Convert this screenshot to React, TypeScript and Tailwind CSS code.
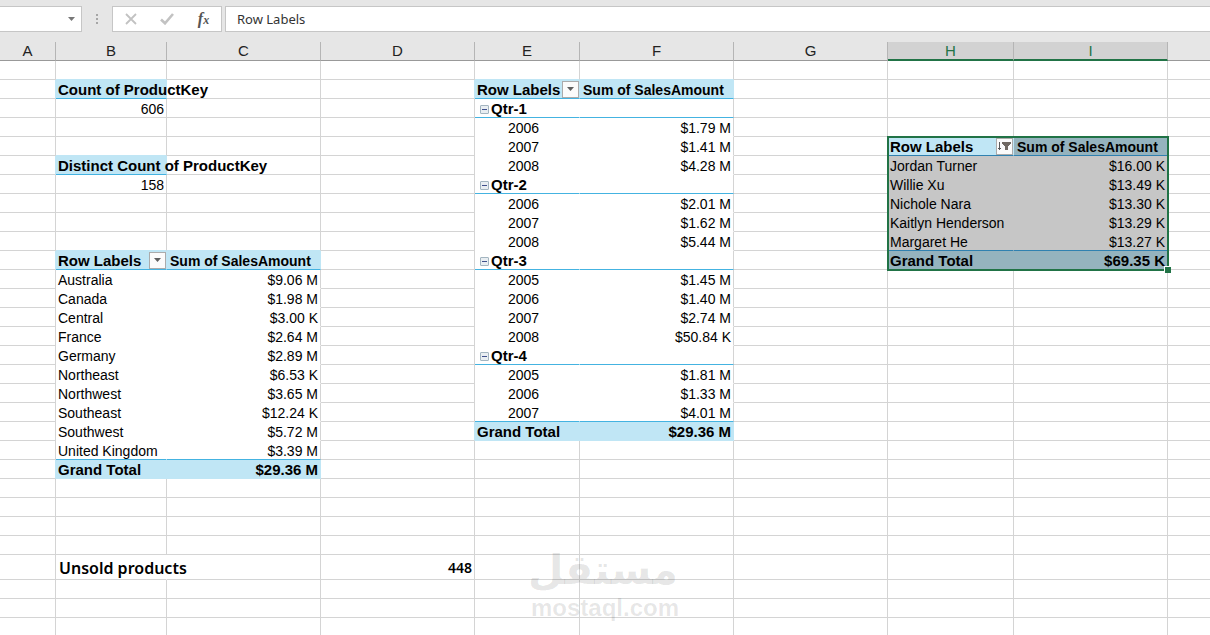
import React from "react";
import clsx from "clsx";

type CellKind = "label" | "amount" | "count" | "sum" | "filter" | "group" | "year" | "note" | "noteValue";

interface Cell {
  text: string;
  kind: CellKind;
  bold?: boolean;
}

const columns = [
  { name: "A", width: "w-[56px]" },
  { name: "B", width: "w-[111px]" },
  { name: "C", width: "w-[154px]" },
  { name: "D", width: "w-[154px]" },
  { name: "E", width: "w-[105px]" },
  { name: "F", width: "w-[154px]" },
  { name: "G", width: "w-[154px]" },
  { name: "H", width: "w-[126px]" },
  { name: "I", width: "w-[154px]" },
  { name: "", width: "" },
];

const ROW_COUNT = 30;
const NOTE_ROW = 27;

const cells: Record<string, Cell> = {};

const countries = [
  ["Australia", "$9.06 M"],
  ["Canada", "$1.98 M"],
  ["Central", "$3.00 K"],
  ["France", "$2.64 M"],
  ["Germany", "$2.89 M"],
  ["Northeast", "$6.53 K"],
  ["Northwest", "$3.65 M"],
  ["Southeast", "$12.24 K"],
  ["Southwest", "$5.72 M"],
  ["United Kingdom", "$3.39 M"],
];

const quarters = [
  ["Qtr-1", ""],
  ["2006", "$1.79 M"],
  ["2007", "$1.41 M"],
  ["2008", "$4.28 M"],
  ["Qtr-2", ""],
  ["2006", "$2.01 M"],
  ["2007", "$1.62 M"],
  ["2008", "$5.44 M"],
  ["Qtr-3", ""],
  ["2005", "$1.45 M"],
  ["2006", "$1.40 M"],
  ["2007", "$2.74 M"],
  ["2008", "$50.84 K"],
  ["Qtr-4", ""],
  ["2005", "$1.81 M"],
  ["2006", "$1.33 M"],
  ["2007", "$4.01 M"],
];

const customers = [
  ["Jordan Turner", "$16.00 K"],
  ["Willie Xu", "$13.49 K"],
  ["Nichole Nara", "$13.30 K"],
  ["Kaitlyn Henderson", "$13.29 K"],
  ["Margaret He", "$13.27 K"],
];

// writes one pivot table into the sheet, header row first
const addPivot = (left: string, right: string, top: number, rows: string[][], total: string) => {
  cells[left + top] = { text: "Row Labels", kind: "filter", bold: true };
  cells[right + top] = { text: "Sum of SalesAmount", kind: "sum", bold: true };
  rows.forEach(([label, amount], i) => {
    const row = top + 1 + i;
    const kind = label.startsWith("Qtr") ? "group" : /^\d+$/.test(label) ? "year" : "label";
    cells[left + row] = { text: label, kind, bold: kind === "group" };
    if (amount) cells[right + row] = { text: amount, kind: "amount" };
  });
  const last = top + rows.length + 1;
  cells[left + last] = { text: "Grand Total", kind: "label", bold: true };
  cells[right + last] = { text: total, kind: "amount", bold: true };
};

cells.B2 = { text: "Count of ProductKey", kind: "label", bold: true };
cells.B3 = { text: "606", kind: "count" };
cells.B6 = { text: "Distinct Count of ProductKey", kind: "label", bold: true };
cells.B7 = { text: "158", kind: "count" };
cells.B27 = { text: "Unsold products", kind: "note" };
cells.D27 = { text: "448", kind: "noteValue" };
addPivot("B", "C", 11, countries, "$29.36 M");
addPivot("E", "F", 2, quarters, "$29.36 M");
addPivot("H", "I", 5, customers, "$69.35 K");

const filled = new Set([
  "B2", "B6", "B11", "C11", "B22", "C22", "E2", "F2", "E20", "F20", "H5", "I5", "H11", "I11",
]);
const headers = new Set(["B2", "B6", "B11", "C11", "E2", "F2", "H5", "I5"]);

const inPivot = (col: string, row: number) =>
  ("BC".includes(col) && row >= 11 && row <= 22) ||
  ("EF".includes(col) && row >= 2 && row <= 20) ||
  ("HI".includes(col) && row >= 5 && row <= 11);

const selected = (col: string, row: number) => "HI".includes(col) && row >= 5 && row <= 11;

const colName = (i: number) => columns[i]?.name || "Z";

const bottomBorder = (col: string, row: number) => {
  const key = col + row;
  const below = col + (row + 1);
  const isGroupRow = "EF".includes(col) && cells["E" + row]?.kind === "group";
  const isTotalBelow = filled.has(below) && !headers.has(below);
  if (headers.has(key) || isGroupRow || isTotalBelow) {
    return selected(col, row) ? "border-b-[#3081b0]" : "border-b-[#44b3e1]";
  }
  if (filled.has(key) || headers.has(below)) return "border-b-[#c0e6f5]";
  if (selected(col, row)) return "border-b-[#c6c6c6]";
  if (inPivot(col, row)) return "border-b-white";
  return "border-b-[#d4d4d4]";
};

const rightBorder = (index: number, row: number) => {
  const col = colName(index);
  const next = colName(index + 1);
  if (index === columns.length - 1) return "border-r-0";
  if (col === "H" && row === 5) return "border-r-[#c0e6f5]";
  if (col === "H" && row === 11) return "border-r-[#95b3be]";
  if (selected(col, row)) return "border-r-[#c6c6c6]";
  if (filled.has(col + row) || filled.has(next + row)) return "border-r-[#c0e6f5]";
  if (inPivot(col, row) && inPivot(next, row)) return "border-r-white";
  if (row === NOTE_ROW && col === "B") return "border-r-white";
  return "border-r-[#d4d4d4]";
};

const fill = (col: string, row: number) => {
  const key = col + row;
  if (key === "H5") return "bg-[#c0e6f5]";
  if (selected(col, row)) return filled.has(key) ? "bg-[#95b3be]" : "bg-[#c6c6c6]";
  return filled.has(key) ? "bg-[#c0e6f5]" : "bg-white";
};

const FilterButton: React.FC<{ sorted: boolean }> = ({ sorted }) => (
  <button
    aria-label="Filter row labels"
    className="flex size-[17px] shrink-0 items-center justify-center border border-[#ababab] bg-[#fbfbfb]"
  >
    {sorted ? (
      <svg viewBox="0 0 15 15" className="size-[15px]" shapeRendering="crispEdges">
        <path d="M2 3h1v8H2zM1 9h3v1H1z" fill="#5a5a5a" />
        <path d="M5 3h9v2h-1v1h-1v1h-1v4H8V7H7V6H6V5H5z" fill="#6f6862" />
      </svg>
    ) : (
      <svg viewBox="0 0 7 4" className="h-[4px] w-[7px]">
        <path d="M0 0h7L3.5 4z" fill="#5f5f5f" />
      </svg>
    )}
  </button>
);

const CollapseButton = () => (
  <button
    aria-label="Collapse group"
    className="mr-[2px] flex size-[9px] shrink-0 items-center justify-center rounded-[1px] border border-[#a3b5c0] bg-[#e9eef2]"
  >
    <span className="h-px w-[5px] bg-[#40508c]" />
  </button>
);

const CellContent: React.FC<{ cell: Cell; sorted: boolean }> = ({ cell, sorted }) => {
  const weight = cell.bold ? "text-[15px] font-bold" : "text-[14px] font-normal";
  switch (cell.kind) {
    case "filter":
      return (
        <div className="flex items-center justify-between pl-[2px] text-[15px] font-bold">
          <span className="pt-[2px]">{cell.text}</span>
          <FilterButton sorted={sorted} />
        </div>
      );
    case "group":
      return (
        <div className="flex items-center pt-[2px] pl-[5px] text-[15px] font-bold">
          <CollapseButton />
          {cell.text}
        </div>
      );
    case "sum":
      return <div className="pt-[2px] pl-[3px] text-[14px] font-bold">{cell.text}</div>;
    case "year":
      return <div className="pt-[2px] pl-[33px] text-[14px]">{cell.text}</div>;
    case "amount":
    case "count":
      return <div className={clsx("pt-[2px] pr-[2px] text-right", weight)}>{cell.text}</div>;
    case "note":
      return (
        <div className="pt-[2px] pl-[3px] font-['Noto_Sans',sans-serif] text-[16px] font-semibold">{cell.text}</div>
      );
    case "noteValue":
      return (
        <div className="pt-[2px] pr-[2px] text-right font-['Noto_Sans',sans-serif] text-[14px] font-semibold">
          {cell.text}
        </div>
      );
    default:
      return <div className={clsx("pt-[2px] pl-[2px]", weight)}>{cell.text}</div>;
  }
};

const FormulaBar = () => (
  <div className="flex h-[42px] items-start bg-[#e6e6e6] pt-[6px]">
    <div className="flex h-[26px] w-[82px] items-center border border-l-0 border-[#c6c6c6] bg-white">
      <input aria-label="Name box" className="w-full min-w-0 outline-none" />
      <button aria-label="Open name list" className="px-[6px]">
        <svg viewBox="0 0 7 4" className="h-[4px] w-[7px]">
          <path d="M0 0h7L3.5 4z" fill="#777777" />
        </svg>
      </button>
    </div>
    <svg viewBox="0 0 30 26" className="h-[26px] w-[30px]" fill="#a6a6a6">
      <path d="M14 8h2v2h-2zM14 12h2v2h-2zM14 16h2v2h-2z" />
    </svg>
    <div className="flex h-[26px] w-[110px] items-center justify-around border border-[#c6c6c6] bg-white">
      <button aria-label="Cancel">
        <svg viewBox="0 0 12 12" className="size-[12px]" fill="none" stroke="#c2c2c2" strokeWidth="1.8">
          <path d="M1 1l10 10M11 1L1 11" />
        </svg>
      </button>
      <button aria-label="Enter">
        <svg viewBox="0 0 14 12" className="h-[12px] w-[14px]" fill="none" stroke="#c2c2c2" strokeWidth="2.6">
          <path d="M1 6.5l4 3.8L13 1" />
        </svg>
      </button>
      <button
        aria-label="Insert function"
        className="font-['Liberation_Serif',serif] text-[16px] leading-[18px] font-bold text-[#555555] italic"
      >
        f<span className="text-[12px]">x</span>
      </button>
    </div>
    <input
      aria-label="Formula bar"
      defaultValue="Row Labels"
      className="ml-[3px] h-[26px] min-w-0 flex-1 border border-r-0 border-[#c6c6c6] bg-white pl-[11px] font-['Noto_Sans',sans-serif] text-[13px] text-[#333333] outline-none"
    />
  </div>
);

const ColumnHeaders = () => (
  <thead>
    <tr className="h-[19px]">
      {columns.map(({ name }, i) => {
        const active = name === "H" || name === "I";
        return (
          <th
            key={i}
            scope="col"
            className={clsx(
              "p-0 pt-px text-center align-top text-[15px] leading-[16px] font-normal",
              active
                ? "border-b-2 border-b-[#217346] bg-[#d2d2d2] text-[#217346]"
                : "border-b border-b-[#999999] bg-[#e6e6e6] text-[#222222]",
              name && "border-r border-r-[#b5b5b5]"
            )}
          >
            {name}
          </th>
        );
      })}
    </tr>
  </thead>
);

// green frame with its fill handle, anchored to the first selected cell
const Selection = () => (
  <div className="pointer-events-none absolute -top-px -left-px h-[135px] w-[282px] border-2 border-[#217346]">
    <span className="absolute -right-[4px] -bottom-[4px] size-[7px] border-t border-l border-white bg-[#217346]" />
  </div>
);

const Watermark = () => (
  <div className="pointer-events-none absolute top-[544px] left-[531px] w-[147px] text-center text-black/10">
    <p
      lang="ar"
      dir="rtl"
      className="font-['DejaVu_Sans',sans-serif] text-[41px] leading-[52px] font-bold whitespace-nowrap"
    >
      مستقل
    </p>
    <p className="text-[24px] leading-[24px] font-bold">mostaql.com</p>
  </div>
);

const App: React.FC = () => {
  return (
    <div className="relative h-screen w-full overflow-hidden bg-white font-['Liberation_Sans',Arial,sans-serif] text-black">
      <FormulaBar />
      <table className="w-full table-fixed border-separate border-spacing-0">
        <colgroup>
          {columns.map((c, i) => (
            <col key={i} className={c.width} />
          ))}
        </colgroup>
        <ColumnHeaders />
        <tbody>
          {Array.from({ length: ROW_COUNT }, (_, i) => i + 1).map((row) => (
            <tr key={row} className={row === NOTE_ROW ? "h-[25px]" : "h-[19px]"}>
              {columns.map((_, index) => {
                const col = colName(index);
                const cell = cells[col + row];
                return (
                  <td
                    key={col}
                    className={clsx(
                      "border-r border-b p-0 align-middle leading-[16px] whitespace-nowrap",
                      fill(col, row),
                      bottomBorder(col, row),
                      rightBorder(index, row),
                      col + row === "H5" && "relative"
                    )}
                  >
                    {cell && <CellContent cell={cell} sorted={col === "H"} />}
                    {col + row === "H5" && <Selection />}
                  </td>
                );
              })}
            </tr>
          ))}
        </tbody>
      </table>
      <Watermark />
    </div>
  );
};

export default App;
